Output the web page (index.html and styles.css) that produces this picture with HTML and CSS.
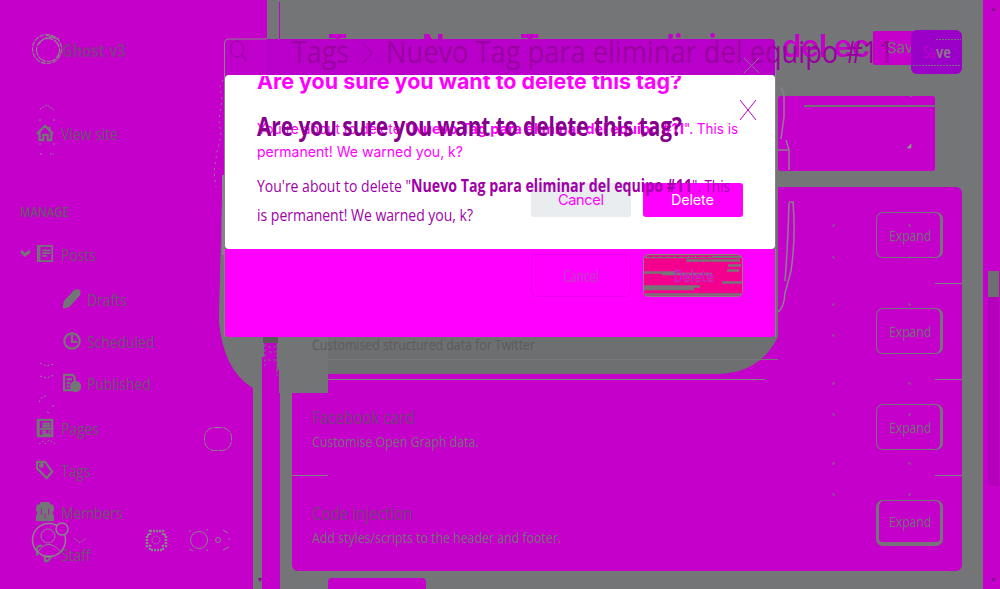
FILE: index.html
```html
<!DOCTYPE html>
<html lang="en"><head><meta charset="utf-8"><title>Delete tag</title><link rel="stylesheet" href="styles.css"></head>
<body><div class="app">
<aside class="sidebar">
 <div class="brand"><svg width="34" height="34" viewBox="0 0 34 34" class="line"><circle cx="15" cy="16" r="14.5" stroke-dasharray="5 1"/><circle cx="16" cy="17" r="11.5" stroke-dasharray="9 1"/><path d="M7 11Q14 1 25 6M14 2l13 4" stroke-dasharray="3 1"/></svg><b class="nar">Ghost v3</b></div>
 <a class="nav site"><svg class="ico" viewBox="0 0 20 20"><path d="M1 11L10 2l9 9M4 9v9h4v-6h5v6h4V9M15 7V3"/></svg><span class="nar">View site</span></a>
 <h4><span class="nar">MANAGE</span></h4>
 <a class="nav"><svg class="ico" viewBox="0 0 20 20"><path d="M2 1h16v17H2zM4 1v17M7 6h9M7 9h9M7 12h5" stroke-width="1.9"/></svg><span class="nar">Posts</span></a>
 <div class="sub">
 <a class="nav"><svg class="ico" viewBox="0 0 20 20"><path class="solid" d="M1 19l1-6L13 1q3-1 5 0v4L6 18z"/></svg><span class="nar">Drafts</span></a>
 <a class="nav"><svg class="ico" viewBox="0 0 20 20"><circle cx="10" cy="10" r="8.5"/><path d="M10 3v8h6"/></svg><span class="nar">Scheduled</span></a>
 <a class="nav"><svg class="ico" viewBox="0 0 20 20"><path d="M11 18H1V1h10l2 3v5M4 6h6M4 10h4M4 14h3"/><circle class="solid" cx="14" cy="14" r="5"/></svg><span class="nar">Published</span></a>
 </div>
 <a class="nav"><svg class="ico" viewBox="0 0 20 20"><path d="M2 1h16v18H2zM3 1v18M7 5h9M7 8h9M5 11h13M7 14h4M14 14h2M7 17h9"/></svg><span class="nar">Pages</span></a>
 <a class="nav"><svg class="ico" viewBox="0 0 20 20"><path d="M1 1h9l8 11-6 7L1 8z"/><circle cx="6" cy="5" r="1.5"/></svg><span class="nar">Tags</span></a>
 <a class="nav"><svg class="ico" viewBox="0 0 20 20"><path class="solid" d="M2 3h3l1-3h8l1 3h3l1 4-2 4 2 4v4H1v-4l2-4-2-4z"/><path d="M6 6v7M14 6v7M10 12v5" stroke="#c400ca" stroke-width="1"/></svg><span class="nar">Members</span></a>
 <a class="nav"><svg class="ico" viewBox="0 0 20 20"><path d="M1 12V3q3-3 6-2M8 13h9l-4 5h-3v-4"/></svg><span class="nar">Staff</span></a>
</aside>
<div class="gutter"></div><div class="strip"></div>
<main>
 <div class="field"></div>
 <section class="card">
  <div class="row"><span class="btn"><span class="nar">Expand</span></span></div>
  <div class="row"><span class="btn"><span class="nar">Expand</span></span></div>
  <div class="row"><div class="copy"><h3 class="nar">Facebook card</h3><p class="nar">Customise Open Graph data.</p></div><span class="btn"><span class="nar">Expand</span></span></div>
  <div class="row"><div class="copy"><h3 class="nar">Code injection</h3><p class="nar">Add styles/scripts to the header and footer.</p></div><span class="btn last"><span class="nar">Expand</span></span></div>
 </section>
 <div class="stub"></div>
</main>
<div class="scroll"></div>
<div class="sidetop"></div>
<svg class="layer shade" viewBox="0 0 1000 589">
 <path d="M267 0H778V187H778V337H719V374H328V393H267Z" fill="#737577"/>
 <path d="M222 200L219 320Q223 370 253 388V393H328V374H719Q760 373 778 337V200Z" fill="#6d6f71"/><path d="M222 200L219 320Q223 370 253 388V393H328V337H225V200Z" fill="#727476"/>
 <path d="M279.500 2V40" stroke="#c400ca"/><path d="M262 393V357h2v-14h13v27h2v23z" fill="#c400ca"/><path d="M263 337h15v6H263z" fill="#595959"/><path d="M265 344v22M277 344v32M268 347h8M269 352h7M268 360h8" stroke="#737577" stroke-dasharray="3 2"/>
 <path d="M328 359.500H778" stroke="#757779"/><path d="M328 379.500H765M292 475.500h36M935 283.500h27M935 379.500h27M935 475.500h27" stroke="#808082"/>
 <text x="312" y="350" font-size="15" textLength="223" lengthAdjust="spacingAndGlyphs" fill="#5b5b5d">Customised structured data for Twitter</text>
</svg>
<svg class="layer" viewBox="0 0 1000 589">
 <g class="inter" fill="#c400ca" font-size="32" font-weight="700"><text x="328" y="58" textLength="435" lengthAdjust="spacingAndGlyphs">Tags › Nuevo Tag para eliminar</text><text x="782" y="57" font-size="31" font-weight="600" textLength="88">del ec</text></g>
 <rect x="873" y="31" width="60" height="34" rx="2" fill="#c400ca"/><text class="inter" x="887" y="53" font-size="15" fill="#737577">Save</text>
 <path d="M225 75V43q0-4 4-4H771q4 0 4 4V75z" fill="#b900ca"/><path d="M225 75V43q0-4 4-4h38v36z" fill="#c000cb"/>
 <path d="M224.500 337V43q0-4 4-4H267M775.500 60V337" fill="none" stroke="#858587"/>
 <g fill="none" stroke="#a300ae" stroke-width="1.300"><ellipse cx="237" cy="49" rx="6.500" ry="8"/><path d="M242 55l5 6M363 43l9 10-9 10"/></g>
 <g class="title"><text x="292" y="63" textLength="57" lengthAdjust="spacingAndGlyphs">Tags</text><text x="386" y="63" textLength="508" lengthAdjust="spacingAndGlyphs">Nuevo Tag para eliminar del equipo #11</text></g>
 <path d="M744 58l15 15M759 58l-15 15" stroke="#8a748c"/>
 <rect x="911" y="30" width="51" height="44" rx="6" fill="#9b00c9"/><path d="M936 39.500h25M913 65.500h48" stroke="#74707a" stroke-dasharray="2 1"/><g font-size="16"><text x="923" y="58" textLength="13" lengthAdjust="spacingAndGlyphs" fill="#c400ca">Sa</text><text x="936" y="58" textLength="15" lengthAdjust="spacingAndGlyphs" fill="#8d748f" font-weight="700">ve</text></g>
 <path d="M225 249h550v84q0 4-4 4H229q-4 0-4-4z" fill="#f0f"/>
 <rect x="225" y="75" width="550" height="174" rx="4" fill="#fff"/>
 <clipPath id="top"><path d="M225 76h550v30H225z"/></clipPath>
 <g class="inter" fill="#f0f"><text clip-path="url(#top)" x="257" y="89" font-size="22" font-weight="700" textLength="425" lengthAdjust="spacingAndGlyphs">Are you sure you want to delete this tag?</text>
 <g font-size="14.500"><text x="257" y="134" textLength="154" lengthAdjust="spacingAndGlyphs">You're about to delete "</text><text x="412" y="134" font-weight="700" textLength="272" lengthAdjust="spacingAndGlyphs">Nuevo Tag para eliminar del equipo #11</text><text x="684" y="134" textLength="54" lengthAdjust="spacingAndGlyphs">". This is</text><text x="257" y="157" textLength="206" lengthAdjust="spacingAndGlyphs">permanent! We warned you, k?</text></g></g>
 <rect x="531" y="183" width="100" height="34" rx="3" fill="#e9edf0"/><rect x="643" y="183" width="100" height="34" rx="3" fill="#f0f"/>
 <g class="inter" font-size="14.500"><text x="558" y="205" fill="#f0f" textLength="46">Cancel</text><text x="671" y="205" fill="#fff" textLength="43">Delete</text></g>
 <text x="257" y="136" font-size="27" font-weight="700" textLength="425" lengthAdjust="spacingAndGlyphs" fill="#85008b">Are you sure you want to delete this tag?</text>
 <path d="M740 100l16 20M756 100l-16 20" stroke="#b500bd"/>
 <g font-size="17" fill="#a000a8"><text x="257" y="192" textLength="154" lengthAdjust="spacingAndGlyphs">You're about to delete "</text><text x="411" y="192" font-weight="700" textLength="281" lengthAdjust="spacingAndGlyphs">Nuevo Tag para eliminar del equipo #11</text><text x="692" y="192" textLength="38" lengthAdjust="spacingAndGlyphs">". This</text><text x="257" y="221" textLength="216" lengthAdjust="spacingAndGlyphs">is permanent! We warned you, k?</text></g>
 <rect x="531.500" y="254.500" width="99" height="42" rx="5" fill="none" stroke="#ea00ee"/><text x="563" y="282" font-size="16" textLength="36" lengthAdjust="spacingAndGlyphs" fill="#c040c5">Cancel</text>
 <rect x="643.500" y="254.500" width="99" height="42" rx="5" fill="#f4008f" stroke="#8d8189"/><path d="M645 257h96M686 260.500h54M644 272.500h32M662 274h50M644 286.500h56M644 289h50M645 294.500h96M727 270.500h12M722 282.500h20M728 265.500h13" stroke="#777577" stroke-width="2.500"/><path d="M647 256.500h65M645 260.500h42M691 258.500h45" stroke="#f4008f" stroke-dasharray="6 1"/><text x="674" y="282" font-size="16" font-weight="600" textLength="40" lengthAdjust="spacingAndGlyphs" fill="#e500dd" stroke="#857687" stroke-width=".3">Delete</text>
 <g fill="none" stroke="#8a808e"><path d="M781 87l3 8v22l-3 22M786 140l3 10v20M778 150h11M793 202q3 35-2 69l-6 22q-1 15-7 19M789 203q-1 40-4 78M789 202h5" stroke-width="1.500"/><path d="M223 80l-3 6 2 14-3 20 2 15-4 17-3 20 2 15" stroke-dasharray="2 4"/><path d="M223.500 175v80" stroke-width="3"/><path d="M804 106H935" stroke="#747078" stroke-width="2"/><path d="M911 96v11" stroke-dasharray="1 8"/><path d="M907 148l4-4v4z" fill="#999"/></g>
 <g fill="none" stroke="#8a838c"><path d="M40 109l7-4 7 5M39 120h2M53 120h2M39 144h2M53 144h2M40 154h3M50 154h4" stroke-dasharray="2 1"/><path d="M40 363l6 3 8-2M40 376l7 2 7-3M39 402l3-5 4-1M52 406h3M47 412l3 1M39 444l4-3 2 3 4-4 6 4" stroke-dasharray="2 2"/><rect x="204.500" y="427.500" width="27" height="23" rx="10" stroke-dasharray="8 1"/><circle cx="49" cy="540" r="16.500" stroke-width="1.500"/><circle cx="48" cy="536" r="7"/><path d="M38 552q10-15 23 0"/><circle cx="62" cy="529" r="6" fill="#c400ca" stroke-width="1.500"/><path d="M74 538l6 5 6-5" stroke-dasharray="2 1"/><path d="M150 531h13v4h3v11h-3v4h-13v-4h-3v-11h3z" stroke-width="2.500" stroke-dasharray="2 1"/><circle cx="156" cy="540" r="4" stroke-dasharray="2 1"/><circle cx="199" cy="540" r="8.500"/><circle cx="218" cy="540" r="2.500"/><path d="M189 532l2-2M189 549l4 2M206 530h2M206 550h2M223 530l5 3M223 550l6-3M229 538v2"/></g>
 <path d="M21 251l4 4 5-4" fill="none" stroke="#737577" stroke-width="3"/>
 <g fill="none" stroke="#77737a"><path d="M833 227v-2h2M833 256v2h2M908 225h2v2M908 258h2v-2M833 306v-2h2M833 334v2h2M908 304h2v2M908 336h2v-2M833 385v-2h2M833 413v2h2M908 383h2v2M908 415h2v-2M833 465v-2h2M833 493v2h2M908 463h2v2M908 495h2v-2"/></g>
 <path d="M257.500 578h5l-2.500 4zM991 11l2.500-4 2.500 4zM991 578h5l-2.500 4z" fill="#84128c"/>
</svg>
</div></body></html>
```
FILE: styles.css
```css
*{box-sizing:border-box}
body{margin:0;font-family:"Open Sans","Noto Sans",sans-serif;background:#737577}
.app{position:relative;display:flex;width:1000px;height:589px;overflow:hidden;background:#737577}
.sidebar{width:253px;background:#c400ca;padding:32px 0 0 32px;color:#6c5670;position:relative;z-index:1}
.nar{display:inline-block;transform:scaleX(.84);transform-origin:left center;white-space:nowrap}
.brand{display:flex;height:36px;align-items:center;font-size:17.5px;color:#873591}
.brand .nar{margin-left:-4px}
.line{fill:none;stroke:#8a838c;stroke-width:1.2;flex:none}
.nav{display:flex;height:42px;align-items:center;gap:7px;padding-left:4px;font-size:16.5px}
.site{margin-top:44px}
.ico{width:18px;height:20px;fill:none;stroke:#737577;stroke-width:2.5;flex:none}
.solid{fill:#737577}
h4{margin:49px 0 11px -12px;font-size:13.5px;line-height:19px;font-weight:600}
.sub{margin:3px 0 3px 27px}
.sub .nav{font-size:16.5px;gap:6px}
.gutter{width:9px}
.strip{width:18px;background:#c400ca}
main{width:703px;padding:96px 21px 0 12px}
.field{width:157px;height:75px;background:#c400ca;border-radius:3px;margin:0 27px 16px auto}
.card{height:384px;background:#c400ca;border-radius:6px;padding:0 19px 0 20px}
.row{height:96px;display:flex;justify-content:flex-end;align-items:center}
.copy{margin-right:auto;width:300px;padding-top:2px}
.copy h3{font-size:18px;font-weight:400;line-height:24px;margin:0 0 1px;display:block;color:#74407a}
.copy p{font-size:14.7px;line-height:20px;margin:0;color:#777079;font-weight:500}
.btn{width:67px;height:46px;border:1px solid #77737a;border-right-width:3px;border-radius:7px;display:flex;align-items:center;padding-left:12px;font-size:14.5px;color:#757177;font-weight:500}
.last{border-left-width:3px;border-bottom-width:4px;padding-left:10px}
.stub{width:98px;height:20px;background:#c400ca;border-radius:4px;margin:7px 0 0 36px}
.scroll{width:17px;background:linear-gradient(#6d6f70,#6d6f70) 5px 271px/11px 26px no-repeat,linear-gradient(#b400bb,#b400bb) 5px 297px/11px 189px no-repeat,#c400ca}
.sidetop{position:absolute;left:253px;top:0;width:14px;height:337px;background:#c400ca}
.layer{position:absolute;left:0;top:0;width:1000px;height:589px;z-index:3;font-family:"Open Sans","Noto Sans",sans-serif}
.shade{z-index:2}
.title{fill:#98009f;font-size:31px;font-weight:500}
.inter{font-family:Inter,sans-serif}
```
